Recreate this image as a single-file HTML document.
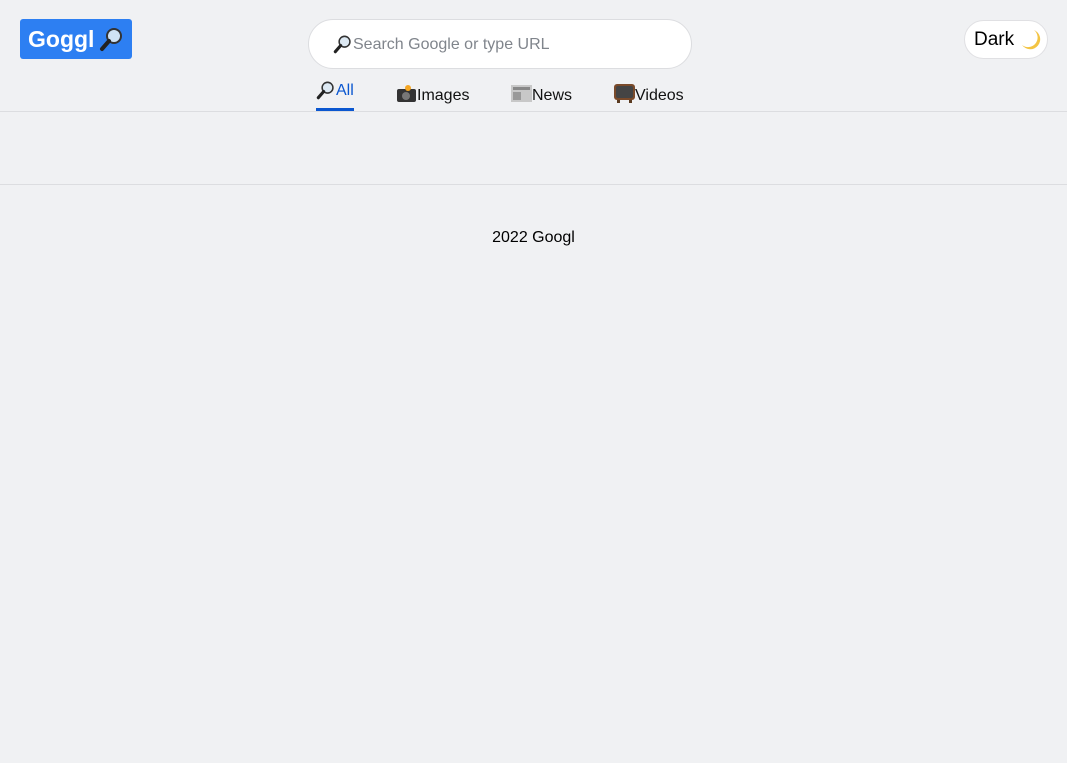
<!DOCTYPE html>
<html><head><meta charset="utf-8"><style>
html,body{margin:0;padding:0}
body{width:1067px;height:763px;background:#f0f1f3;font-family:"Liberation Sans",sans-serif;position:relative;overflow:hidden}
.a{position:absolute}
.logo{left:20px;top:19px;width:112px;height:40px;background:#2d7ff2;border-radius:3px;color:#fff;font-weight:bold;font-size:23px;line-height:40px}
.search{left:308px;top:19px;width:382px;height:48px;background:#fff;border:1px solid #dcdde0;border-radius:25px}
.ph{left:353px;top:36px;font-size:16px;color:#80858c}
.tab{top:87px;font-size:16px;color:#111}
.dark{left:964px;top:20px;width:82px;height:37px;background:#fff;border:1px solid #e0e0e3;border-radius:20px;font-size:19px;line-height:37px}
</style></head><body>
<div class="a logo"><span style="position:absolute;left:8px">Goggl</span>
<svg class="a" style="left:79px;top:7px" width="26" height="26" viewBox="0 0 26 26"><circle cx="15" cy="10" r="7" fill="#cfe3f5" stroke="#333" stroke-width="2"/><line x1="10" y1="15" x2="3" y2="23" stroke="#222" stroke-width="4" stroke-linecap="round"/></svg></div>
<div class="a search"></div>
<svg class="a" style="left:333px;top:34px" width="20" height="20" viewBox="0 0 26 26"><circle cx="15" cy="10" r="7" fill="#dde9f3" stroke="#333" stroke-width="2"/><line x1="10" y1="15" x2="3" y2="23" stroke="#222" stroke-width="4" stroke-linecap="round"/></svg>
<div class="a ph">Search Google or type URL</div>
<svg class="a" style="left:316px;top:80px" width="20" height="20" viewBox="0 0 26 26"><circle cx="15" cy="10" r="7" fill="#dde9f3" stroke="#333" stroke-width="2"/><line x1="10" y1="15" x2="3" y2="23" stroke="#222" stroke-width="4" stroke-linecap="round"/></svg>
<div class="a tab" style="left:336px;top:82px;color:#0b57d0">All</div>
<div class="a" style="left:316px;top:108px;width:38px;height:3px;background:#0b57d0"></div>
<svg class="a" style="left:396px;top:85px" width="21" height="18"><rect x="1" y="4" width="19" height="13" rx="2" fill="#333"/><circle cx="10" cy="11" r="4" fill="#777"/><circle cx="12" cy="3" r="3" fill="#f5a623"/></svg>
<div class="a tab" style="left:417px">Images</div>
<svg class="a" style="left:511px;top:85px" width="21" height="17"><rect x="0" y="0" width="21" height="17" fill="#c8c8c8"/><rect x="2" y="2" width="17" height="3" fill="#888"/><rect x="2" y="7" width="8" height="8" fill="#999"/></svg>
<div class="a tab" style="left:532px">News</div>
<svg class="a" style="left:614px;top:84px" width="21" height="19"><rect x="0" y="0" width="21" height="16" rx="3" fill="#7a4a2a"/><rect x="2" y="2" width="17" height="12" rx="2" fill="#444"/><rect x="3" y="16" width="3" height="3" fill="#5a3a20"/><rect x="15" y="16" width="3" height="3" fill="#5a3a20"/></svg>
<div class="a tab" style="left:635px">Videos</div>
<div class="a" style="left:0;top:111px;width:1067px;height:1px;background:#dcdde0"></div>
<div class="a" style="left:0;top:184px;width:1067px;height:1px;background:#dcdde0"></div>
<div class="a dark"><span style="position:absolute;left:9px">Dark</span>
<svg class="a" style="left:56px;top:8px" width="20" height="22" viewBox="0 0 20 22"><path d="M13 1 A10 10 0 1 1 1 16 A8 8 0 0 0 13 1Z" fill="#f3c443"/></svg></div>
<div class="a" style="left:0;top:229px;width:1067px;text-align:center;font-size:16px;color:#000">2022 Googl</div>
</body></html>
